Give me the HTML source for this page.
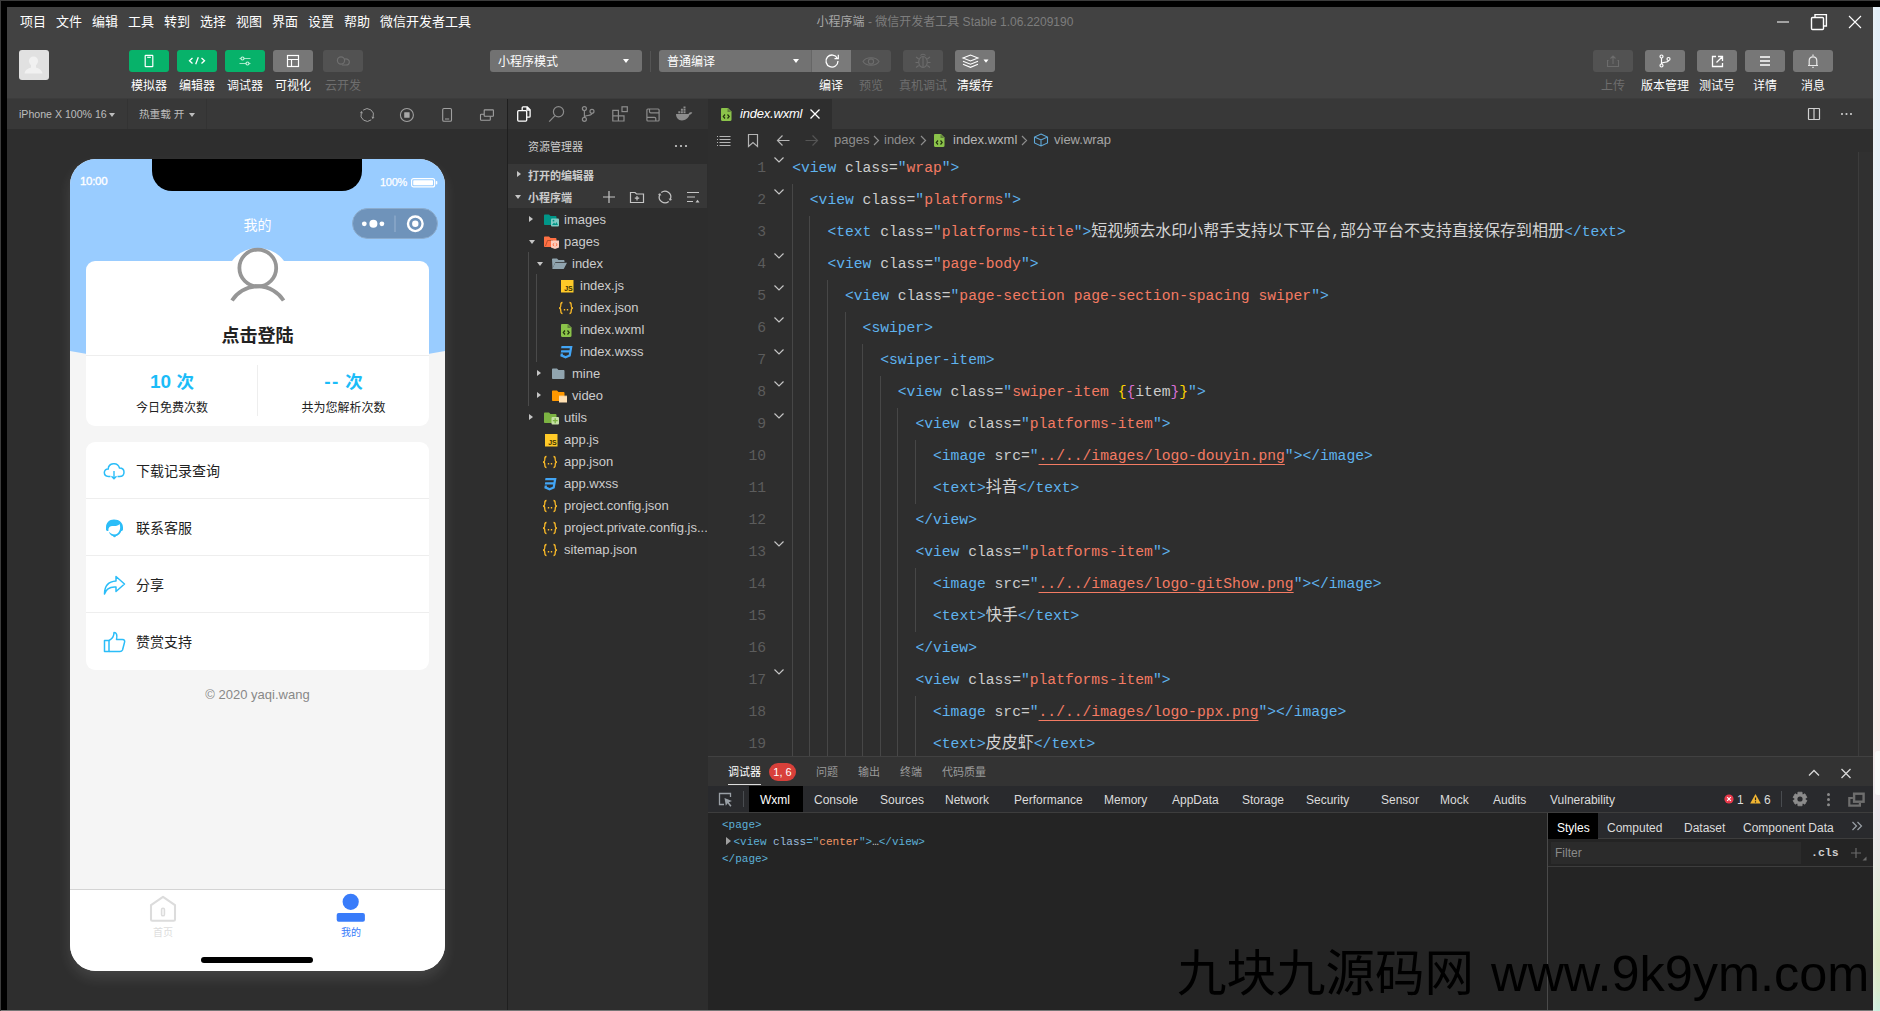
<!DOCTYPE html>
<html lang="zh-CN">
<head>
<meta charset="utf-8">
<title>小程序端 - 微信开发者工具 Stable 1.06.2209190</title>
<style>
*{box-sizing:border-box;margin:0;padding:0}
html,body{width:1880px;height:1011px;overflow:hidden;background:#000}
body{position:relative;font-family:"Liberation Sans","Noto Sans CJK SC",sans-serif;font-size:12px;color:#fff;line-height:1}
.a{position:absolute}
svg{display:block;overflow:visible}
/* outer frame */
#edgeT{left:0;top:0;width:1880px;height:1px;background:#3c3c3c}
#edgeL{left:0;top:0;width:1px;height:1011px;background:#3c3c3c}
#edgeR{left:1873px;top:7px;width:7px;height:1004px;background:linear-gradient(90deg,rgba(255,255,255,.25),rgba(255,255,255,0) 60%),linear-gradient(180deg,#e2eef7 0%,#e6eff6 15%,#f1eef0 30%,#f6ebea 45%,#f6eae8 72%,#f3ecee 75%,#ece7ee 80%,#e8e8e4 85%,#e0ecd2 90%,#dde9c6 95%,#d8ebcf 98%,#cdeede 100%)}
#edgeB{left:1px;top:1010px;width:1872px;height:1px;background:#767676}
#app{left:7px;top:7px;width:1866px;height:1003px;background:#424242;overflow:hidden}
#pg{left:-7px;top:-7px;width:1880px;height:1011px}
/* menu bar */
#menu span.m{position:absolute;top:15px;font-size:13px;color:#fff;white-space:nowrap}
#title{left:0;width:1890px;top:16px;text-align:center;font-size:12px;color:#7d7d7d;white-space:nowrap}
#title b{font-weight:normal;color:#a8a8a8}
/* toolbar */
.tb{position:absolute;top:50px;width:40px;height:22px;border-radius:3px;background:#777}
.tb.g{background:#07b26a}
.tb.d{background:#525252}
.tl{position:absolute;top:79.5px;width:80px;text-align:center;font-size:12px;color:#fff;white-space:nowrap}
.tl.d{color:#6e6e6e}
.sel{position:absolute;top:50px;height:22px;border-radius:3px;background:#727272;font-size:12px;color:#fff;line-height:25px;padding-left:8px}
.sel:after{content:"";position:absolute;right:13px;top:9px;border:3px solid transparent;border-top:4px solid #fff}

/* simulator */
#sim{left:7px;top:98px;width:500px;height:912px;background:#2e2e2e}
#simbar{left:7px;top:98px;width:500px;height:31px;background:#383838}
#simbar .t{position:absolute;top:11px;font-size:10.600px;color:#bdbdbd;white-space:nowrap}
.car{position:absolute;border:3.5px solid transparent;border-top:4.5px solid #bdbdbd}
#phone{left:70px;top:159px;width:375px;height:812px;border-radius:26px;background:#f5f5f5;overflow:hidden;color:#222}
#phsh{left:70px;top:159px;width:375px;height:812px;border-radius:26px;box-shadow:0 7px 14px 0 rgba(255,255,255,.11)}
#phone .hd{left:-95px;top:-293px;width:565px;height:500px;background:#9cf;border-radius:0 0 50% 50%/0 0 12% 12%}
#phone .card{left:16px;width:343px;background:#fff;border-radius:9px}
#phone .row{position:absolute;left:0;width:343px;height:57px;border-top:1px solid #eee}
#phone .row span{position:absolute;left:50px;top:22px;font-size:14px;color:#222}
#phone .row svg{position:absolute;left:15.500px;top:16.500px}

/* explorer */
#exp{left:507px;top:98px;width:201px;height:912px;background:#2d2d2d;border-left:1px solid #1f1f1f}
#expbar{left:508px;top:98px;width:200px;height:31px;background:#333}
#exphd{left:508px;top:129px;width:199px;height:35px;background:#2d2d2d}
.sec{position:absolute;left:508px;width:199px;height:22px;background:#373737;font-size:11px;font-weight:bold;color:#ccc;line-height:24px;padding-left:20px;white-space:nowrap}
.tr{position:absolute;left:508px;width:199px;height:22px;font-size:13px;color:#ccc;line-height:21px;white-space:nowrap;overflow:hidden}
.tr svg{position:absolute;top:3px}
.tr i{position:absolute;top:7px;margin-left:1px}
.ar{border:3.500px solid transparent;border-left:4.500px solid #c5c5c5;border-right:0;width:0;height:0}
.ad{border:3.500px solid transparent;border-top:4.500px solid #c5c5c5;border-bottom:0;width:0;height:0;margin-top:2px;margin-left:-2px}

/* editor */
#ed{left:708px;top:98px;width:1165px;height:658px;background:#2e2e2e}
#tabs{left:708px;top:98px;width:1165px;height:31px;background:#383838}
#tab1{left:708px;top:98px;width:124px;height:31px;background:#2e2e2e}
#bc{left:708px;top:129px;width:1165px;height:23px}
#bc span{position:absolute;top:4px;font-size:13px;color:#8d8d8d;white-space:nowrap}
.ln{position:absolute;margin-left:-0.800px;height:32px;font-family:"Liberation Mono","Noto Sans CJK SC",monospace;font-size:14.667px;line-height:32px;white-space:pre;color:#ccc;letter-spacing:0}
.ln b{font-weight:normal;color:#5fb3ee}
.ln u{text-decoration:none;color:#f47b63}
.ln u.l{text-decoration:underline;text-underline-offset:4px;text-decoration-thickness:1px}
.ln s{text-decoration:none;color:#ffd500}
.ln em{font-style:normal;color:#da70d6}
.ln i{line-height:0;font-style:normal;font-family:"Noto Sans CJK SC",sans-serif;font-size:16px;color:#d4d4d4}
.no{position:absolute;left:708px;width:58px;height:32px;text-align:right;font-family:"Liberation Mono",monospace;font-size:14.667px;line-height:32px;color:#5c5c5c}
.gd{position:absolute;width:1px;background:#474747}

/* debug */
#dbg{left:708px;top:756px;width:1165px;height:254px;background:#242424;border-top:1px solid #414141}
#dbghd{left:708px;top:757px;width:1165px;height:29px;background:#333}
#dbghd span{position:absolute;top:10px;font-size:11px;color:#999;white-space:nowrap}
#dt{left:708px;top:786px;width:1165px;height:27px;background:#292a2d;border-bottom:1px solid #3d3d3d}
#dt span{position:absolute;top:8px;font-size:12px;color:#dcdcdc;white-space:nowrap}
.wx{position:absolute;font-family:"Liberation Mono",monospace;font-size:11px;white-space:pre;color:#5db0d7}
.wx b{font-weight:normal;color:#9bbbdc}
.wx u{text-decoration:none;color:#f29766}
.wx i{font-style:normal;color:#ccc}
#st span{position:absolute;top:8.500px;font-size:12px;color:#dcdcdc;white-space:nowrap}
#wm{left:1177px;top:944px;font-size:50px;color:#000;white-space:nowrap;font-family:"Liberation Sans","Noto Sans CJK SC",sans-serif;line-height:60px}
</style>
</head>
<body>
<div class="a" id="edgeT"></div>
<div class="a" id="edgeL"></div>
<div class="a" id="edgeR"></div>
<div class="a" id="app"><div class="a" id="pg">
<div id="menu">
<span class="m" style="left:20px">项目</span><span class="m" style="left:56px">文件</span><span class="m" style="left:92px">编辑</span><span class="m" style="left:128px">工具</span><span class="m" style="left:164px">转到</span><span class="m" style="left:200px">选择</span><span class="m" style="left:236px">视图</span><span class="m" style="left:272px">界面</span><span class="m" style="left:308px">设置</span><span class="m" style="left:344px">帮助</span><span class="m" style="left:380px">微信开发者工具</span>
<div class="a" id="title"><b>小程序端</b> - 微信开发者工具 Stable 1.06.2209190</div>
<svg class="a" style="left:1770px;top:10px" width="100" height="26" viewBox="0 0 100 26" fill="none" stroke="#fff" stroke-width="1.2">
<path d="M7 12H19" stroke="#bbb" stroke-width="1.6"/>
<rect x="41.5" y="7.5" width="12" height="12" rx="1" stroke-width="1.4"/><path d="M45 7V4.600H56.400V16H54" stroke-width="1.4"/>
<path d="M79 6L91 18M91 6L79 18" stroke-width="1.1"/>
</svg>
</div>
<div id="toolbar">
<div class="a" style="left:19px;top:50px;width:30px;height:30px;border-radius:3px;background:#e1e1e1;overflow:hidden"><svg width="30" height="30" viewBox="0 0 30 30"><circle cx="14.5" cy="11" r="4.6" fill="#f1f1f1"/><path d="M5.5 23.5C6 20 9 18.5 12 17.5V15H17V17.5C20 18.5 23 20 23.5 23.5Z" fill="#f1f1f1"/></svg></div>
<div class="tb g" style="left:129px"><svg width="40" height="22" viewBox="0 0 40 22" fill="none" stroke="#fff" stroke-width="1.2"><rect x="16.2" y="5.3" width="7.6" height="11.4" rx="0.5"/><path d="M18.2 7.3H21.8"/></svg></div><div class="tb g" style="left:177px"><svg width="40" height="22" viewBox="0 0 40 22" fill="none" stroke="#fff" stroke-width="1.2"><path d="M15.5 8L12.5 10.7L15.5 13.4M24.5 8L27.5 10.7L24.5 13.4M21.3 7.2L18.7 14.2" stroke-width="1.3"/></svg></div><div class="tb g" style="left:225px"><svg width="40" height="22" viewBox="0 0 40 22" fill="none" stroke="#fff" stroke-width="1.2"><path d="M14.5 8.5H16M19 8.5H25.500M14.500 13.500H21M24 13.500H25.500" stroke="#9fe6c6"/><circle cx="17.5" cy="8.500" r="1.500" stroke="#c8f3de"/><circle cx="22.500" cy="13.500" r="1.500" stroke="#c8f3de"/></svg></div><div class="tb " style="left:273px"><svg width="40" height="22" viewBox="0 0 40 22" fill="none" stroke="#fff" stroke-width="1.2"><rect x="14.500" y="5.500" width="11" height="11"/><path d="M14.500 9.500H25.500M18.500 9.500V16.500"/></svg></div><div class="tb d" style="left:323px"><svg width="40" height="22" viewBox="0 0 40 22" fill="none" stroke="#fff" stroke-width="1.2"><circle cx="18" cy="10.5" r="3.600" stroke="#6f6f6f"/><path d="M21.300 9.200C24.500 8.200 26.800 10.300 26.300 12.600C26 14.300 24.600 15 23.200 15H19" stroke="#6f6f6f"/></svg></div><div class="tl " style="left:109px">模拟器</div><div class="tl " style="left:157px">编辑器</div><div class="tl " style="left:205px">调试器</div><div class="tl " style="left:253px">可视化</div><div class="tl d" style="left:303px">云开发</div>
<div class="sel" style="left:490px;width:152px">小程序模式</div><div class="a" style="left:650px;top:51px;width:1px;height:21px;background:#545454"></div><div class="sel" style="left:659px;width:153px;border-radius:3px 0 0 3px">普通编译</div>
<div class="tb" style="left:811px;border-radius:0;border-left:1px solid #666;background:#7a7a7a"><svg width="40" height="22" viewBox="0 0 40 22" fill="none" stroke="#fff" stroke-width="1.3"><path d="M25.300 8.200A6 6 0 1 0 26 11"/><path d="M26.300 4.800V8.600H22.500" stroke-width="1.2"/></svg></div><div class="tb d" style="left:851px;border-radius:0 3px 3px 0"><svg width="40" height="22" viewBox="0 0 40 22" fill="none" stroke="#6c6c6c" stroke-width="1.1"><path d="M12 11.500C15 6.500 25 6.500 28 11.500C25 16.500 15 16.500 12 11.500Z"/><circle cx="20" cy="11.500" r="2.600"/></svg></div><div class="tb d" style="left:903px"><svg width="40" height="22" viewBox="0 0 40 22" fill="none" stroke="#6c6c6c" stroke-width="1.1"><ellipse cx="20" cy="12" rx="4.300" ry="5.500"/><path d="M20 7V17.500M17.500 5.500C18.500 3.800 21.500 3.800 22.500 5.500M15.700 9L13 7M15.700 12.500H12.500M15.700 15.500L13 17.500M24.300 9L27 7M24.300 12.500H27.500M24.300 15.500L27 17.500"/></svg></div><div class="tb" style="left:955px"><svg width="40" height="22" viewBox="0 0 40 22" fill="none" stroke="#fff" stroke-width="1.1"><path d="M8 8L15.500 5L23 8L15.500 11Z"/><path d="M8 11.200L15.500 14.200L23 11.200M8 14.300L15.500 17.300L23 14.300"/><path d="M28.500 9.500H33.500L31 12.800Z" fill="#fff" stroke="none"/></svg></div>
<div class="tl " style="left:791px">编译</div><div class="tl d" style="left:831px">预览</div><div class="tl d" style="left:883px">真机调试</div><div class="tl " style="left:935px">清缓存</div>
<div class="tb d" style="left:1593px"><svg width="40" height="22" viewBox="0 0 40 22" fill="none" stroke="#6c6c6c" stroke-width="1.1"><path d="M15.500 10.500H14.500V16.500H25.500V10.500H24.500M20 14V6M17.500 8.500L20 6L22.500 8.500"/></svg></div><div class="tb " style="left:1645px"><svg width="40" height="22" viewBox="0 0 40 22" fill="none" stroke="#fff" stroke-width="1.2"><circle cx="16.500" cy="6.500" r="1.500"/><circle cx="16.500" cy="15.500" r="1.500"/><circle cx="23.500" cy="9" r="1.500"/><path d="M16.500 8V14M23.500 10.500C23.500 13 16.500 11.500 16.500 14"/></svg></div><div class="tb " style="left:1697px"><svg width="40" height="22" viewBox="0 0 40 22" fill="none" stroke="#fff" stroke-width="1.2"><path d="M19 6.500H15.500V16.500H25.500V13M21 6.500H25.500V11M25.300 6.700L19.500 12.500" stroke-width="1.3"/></svg></div><div class="tb " style="left:1745px"><svg width="40" height="22" viewBox="0 0 40 22" fill="none" stroke="#fff" stroke-width="1.2"><path d="M15 7H25M15 11H25M15 15H25" stroke-width="1.300"/></svg></div><div class="tb " style="left:1793px"><svg width="40" height="22" viewBox="0 0 40 22" fill="none" stroke="#fff" stroke-width="1.2"><path d="M15 15.500H25M16.200 15.500V10.800C16.200 5.500 23.800 5.500 23.800 10.800V15.500M20 4.500V6M19.300 17.300H20.700" stroke="#e8e8e8"/></svg></div><div class="tl d" style="left:1573px">上传</div><div class="tl " style="left:1625px">版本管理</div><div class="tl " style="left:1677px">测试号</div><div class="tl " style="left:1725px">详情</div><div class="tl " style="left:1773px">消息</div>
</div>
<div class="a" id="sim"></div>
<div class="a" style="left:7px;top:98px;width:1866px;height:1px;background:#3c3c3c;z-index:5"></div>
<div class="a" id="simbar">
<span class="t" style="left:12px">iPhone X 100% 16</span><i class="car" style="left:102px;top:15px"></i>
<i class="a" style="left:120px;top:0;width:1px;height:31px;background:#333"></i>
<span class="t" style="left:132px">热重载 开</span><i class="car" style="left:182px;top:15px"></i>
<i class="a" style="left:199px;top:0;width:1px;height:31px;background:#333"></i>
<svg class="a" style="left:350px;top:6px" width="150" height="22" viewBox="0 0 150 22" fill="none" stroke="#a0a0a0" stroke-width="1.100">
<path d="M6.150 6.170A6.300 6.300 0 0 1 16.120 13.150M14.250 15.830A6.300 6.300 0 0 1 4.280 8.850" stroke-width="1"/><path d="M4.900 7L2.900 8.500L5.900 9.500ZM15.500 15L17.500 13.500L14.500 12.500Z" fill="#a0a0a0" stroke="none"/>
<circle cx="49.900" cy="11" r="6.500"/><rect x="47.200" y="8.300" width="5.400" height="5.400" rx="0.500" fill="#a8a8a8" stroke="none"/>
<rect x="85.700" y="4.500" width="8.800" height="12.800" rx="1.300"/><path d="M88 15H92.200" stroke-width="1"/>
<rect x="127.200" y="5.900" width="9.200" height="6.300" rx="0.500"/><path d="M127 10.200H124.200C123.800 10.200 123.500 10.500 123.500 10.900V15.500C123.500 15.900 123.800 16.200 124.200 16.200H132.600C133 16.200 133.300 15.900 133.300 15.500V12.500"/>
</svg>
</div>
<div class="a" id="phsh"></div>
<div class="a" id="phone">
<div class="a hd"></div>
<div class="a" style="left:82px;top:0;width:210px;height:32px;background:#000;border-radius:0 0 20px 20px"></div>
<div class="a" style="left:10px;top:17px;font-size:11.500px;color:#fff;letter-spacing:-0.300px;-webkit-text-stroke:0.35px #fff">10:00</div>
<div class="a" style="left:310px;top:18px;font-size:11px;color:#fff;letter-spacing:-0.300px;-webkit-text-stroke:0.25px #fff">100%</div>
<svg class="a" style="left:341px;top:19px" width="28" height="10" viewBox="0 0 28 10"><rect x="0.600" y="0.600" width="23" height="8.300" rx="2" fill="none" stroke="#fff" stroke-width="1.200"/><rect x="2.200" y="2.200" width="19.800" height="5.100" rx="0.800" fill="#fff"/><rect x="24.800" y="3" width="1.500" height="3.500" rx="0.700" fill="#fff"/></svg>
<div class="a" style="left:0;top:59px;width:375px;text-align:center;font-size:14px;color:#fff;padding-left:0">我的</div>
<div class="a" style="left:282px;top:49px;width:86px;height:31px;border-radius:16px;background:#6f93ba;border:1px solid #8caccd"></div>
<svg class="a" style="left:282px;top:49px" width="86" height="31" viewBox="0 0 86 31"><circle cx="12.300" cy="15.800" r="2.400" fill="#fff"/><circle cx="21.400" cy="15.800" r="4" fill="#fff"/><circle cx="29.900" cy="15.800" r="2.400" fill="#fff"/><path d="M43 7.500V24" stroke="#9db7d3" stroke-width="0.900"/><circle cx="63.300" cy="15.800" r="7.300" fill="none" stroke="#fff" stroke-width="2.400"/><circle cx="63.300" cy="15.800" r="3.200" fill="#fff"/></svg>
<!-- profile card -->
<div class="a card" style="top:102px;height:165px"></div>
<div class="a" style="left:155px;top:89px;width:66px;height:66px;border-radius:50%;background:#fff"></div>
<svg class="a" style="left:155px;top:89px" width="66" height="66" viewBox="0 0 66 66" fill="none" stroke="#969696" stroke-width="3.800"><circle cx="32.800" cy="20" r="18.400"/><path d="M7 52.400A30.600 30.600 0 0 1 58.600 52.400"/></svg>
<div class="a" style="left:0;top:168px;width:375px;text-align:center;font-size:18px;font-weight:bold;color:#222">点击登陆</div>
<div class="a" style="left:16px;top:196px;width:343px;height:1px;background:#eee"></div>
<div class="a" style="left:187px;top:206px;width:1px;height:51px;background:#eee"></div>
<div class="a" style="left:16px;top:213px;width:172px;text-align:center;font-size:19px;font-weight:bold;color:#1bbcf8">10 <span style="font-size:17.5px">次</span></div>
<div class="a" style="left:188px;top:213px;width:171px;text-align:center;font-size:19px;font-weight:bold;color:#1bbcf8"><span style="letter-spacing:1.5px">--</span> <span style="font-size:17.5px">次</span></div>
<div class="a" style="left:16px;top:243px;width:172px;text-align:center;font-size:12px;color:#222">今日免费次数</div>
<div class="a" style="left:188px;top:243px;width:171px;text-align:center;font-size:12px;color:#222">共为您解析次数</div>
<!-- list -->
<div class="a card" style="top:283px;height:228px;overflow:hidden">
<div class="row" style="top:-1px"><svg width="24" height="24" viewBox="0 0 24 24" fill="none" stroke="#2bbdf8" stroke-width="1.500"><path d="M8.500 17.500H6.500C0.800 17.200 1.200 9.800 6.200 10C6.500 4 15.500 2.500 17.500 9C23.500 9 23.500 17.500 17.500 17.500H15.500"/><path d="M12 12V19.500M9.500 17.300L12 19.800L14.500 17.300" stroke-width="1.400"/></svg><span>下载记录查询</span></div>
<div class="row" style="top:56px"><svg width="24" height="24" viewBox="0 0 24 24" fill="#2bbdf8"><path d="M12 3.500C7 3.500 4 7 4 11.500V13.500C4 14.500 5 15.300 6 15L6.500 14.800C6 10.500 9 9.500 12.500 10C14.500 10 16.500 9.500 17.500 8C18.300 10 18.500 12.500 17.500 14.500C16.500 17 14.500 18.500 12.500 18.500C10.500 18.500 8.500 17.500 7.300 15.800C7 17.500 9 20 12 20.300C15.500 20.300 18.500 18 19.300 15C20.300 15 21 14.300 21 13.500V11.500C21 7 17.500 3.500 12 3.500Z"/><circle cx="12.500" cy="20" r="1.300"/></svg><span>联系客服</span></div>
<div class="row" style="top:113px"><svg width="24" height="24" viewBox="0 0 24 24" fill="none" stroke="#2bbdf8" stroke-width="1.500" stroke-linejoin="round"><path d="M14 3.500L22.500 11L14 18.500V14C8 13.500 4 16 2.500 21C2.500 13 6.500 8.500 14 8Z"/></svg><span>分享</span></div>
<div class="row" style="top:170px"><svg width="24" height="24" viewBox="0 0 24 24" fill="none" stroke="#2bbdf8" stroke-width="1.500" stroke-linejoin="round"><path d="M2.500 10.500H7V21.500H2.500Z"/><path d="M7 10.500C10 9 12 6 12 2.500C14.500 2.500 15.500 5 14.500 9.500H20.500C22.500 9.500 23 11 22.500 12.500L20.500 20C20 21 19.500 21.500 18 21.500H7"/></svg><span>赞赏支持</span></div>
</div>
<div class="a" style="left:0;top:529px;width:375px;text-align:center;font-size:13px;color:#888">© 2020 yaqi.wang</div>
<!-- tabbar -->
<div class="a" style="left:0;top:730px;width:375px;height:82px;background:#fff;border-top:1px solid #d4d4d4"></div>
<svg class="a" style="left:78px;top:735px" width="30" height="30" viewBox="0 0 30 30" fill="none" stroke="#dcdcdc" stroke-width="2.1" stroke-linejoin="round"><path d="M3 11.200L15 2.800L27 11.200V25.500C27 26.300 26.500 26.800 25.700 26.800H4.300C3.500 26.800 3 26.300 3 25.500Z"/><rect x="13.600" y="14.200" width="2.800" height="7.600" rx="1.400" stroke-width="1.600"/></svg>
<div class="a" style="left:43px;top:769px;width:100px;text-align:center;font-size:10px;color:#ddd">首页</div>
<svg class="a" style="left:265px;top:733px" width="32" height="32" viewBox="0 0 32 32" fill="#397cfa"><circle cx="15.700" cy="9.800" r="8.100"/><rect x="1.700" y="21" width="28.200" height="8.700" rx="2"/></svg>
<div class="a" style="left:231px;top:769px;width:100px;text-align:center;font-size:10px;color:#397cfa">我的</div>
<div class="a" style="left:131px;top:798px;width:112px;height:6px;border-radius:3px;background:#000"></div>
</div>
<div class="a" id="exp"></div><div class="a" id="expbar">
<svg class="a" style="left:0;top:0" width="199" height="31" viewBox="0 0 199 31" fill="none" stroke="#8c8c8c" stroke-width="1.200">
<path d="M14.200 12V9.800C14.200 9.300 14.600 8.900 15.100 8.900H19.300L22.100 11.700V18.200C22.100 18.700 21.700 19.100 21.200 19.100H18.800M19 9V12H22" stroke="#fff" stroke-width="1.300"/><rect x="9.700" y="12.700" width="9" height="10.400" rx="1" stroke="#fff" stroke-width="1.300"/>
<circle cx="50.500" cy="13.800" r="5.100"/><path d="M47 17.600L41.200 23.600"/>
<circle cx="76.400" cy="10.600" r="2"/><circle cx="76.400" cy="21.300" r="2"/><circle cx="84" cy="13.300" r="2"/><path d="M76.400 12.600V19.300M84 15.300C84 18.500 76.400 16.500 76.400 19.300"/>
<path d="M104.800 12.300H110.400V17.800H116V23H104.800ZM110.400 17.800V23M104.800 17.800H110.400"/><rect x="114" y="8.800" width="5.300" height="4.800"/>
<rect x="138.900" y="11" width="12.200" height="12" rx="1"/><path d="M141.500 11V13.500C141.500 14.300 142 14.800 142.800 14.800H151M139 19.300H146.500C147.300 19.300 147.800 19.800 147.800 20.600V23"/>
<path d="M168 16H180.500C181 14.500 182.300 13.800 184.300 14.400C183.800 15.600 182.800 16.500 181.500 16.800C180.500 20 177.500 22.400 174 22.400C170 22.400 168 19.500 168 16Z" fill="#8c8c8c" stroke="none"/><path d="M170.300 13.300H172.300V15.300H170.300ZM172.900 13.300H174.900V15.300H172.900ZM175.500 13.300H177.500V15.300H175.500ZM172.900 10.800H174.900V12.800H172.900ZM175.500 10.800H177.500V12.800H175.500ZM175.500 8.600H177.500V10.300H175.500Z" fill="#8c8c8c" stroke="none"/>
</svg></div>
<div class="a" id="exphd"><span class="a" style="left:20px;top:13px;font-size:11px;color:#ccc">资源管理器</span><svg class="a" style="left:166px;top:15px" width="14" height="4" viewBox="0 0 14 4" fill="#ccc"><circle cx="2" cy="2" r="1.100"/><circle cx="7" cy="2" r="1.100"/><circle cx="12" cy="2" r="1.100"/></svg></div>
<div class="sec" style="top:164px"><i class="a ar" style="left:8.5px;top:7px;border-left-color:#c5c5c5"></i>打开的编辑器</div>
<div class="sec" style="top:186px"><i class="a ad" style="left:9px;top:7px"></i>小程序端
<svg class="a" style="left:92px;top:2px" width="104" height="18" viewBox="0 0 104 18" fill="none" stroke="#c5c5c5" stroke-width="1.200"><path d="M9 3V15M3 9H15"/><path d="M30.500 4.500H35L36.500 6H43.500V14.500H30.500ZM37 8V12.500M34.800 10.200H39.200"/><path d="M61.27 4.56A5.8 5.8 0 0 1 70.45 10.98M68.73 13.44A5.8 5.8 0 0 1 59.55 7.02"/><path d="M69.83 12.68L72.24 11.63L68.66 10.33ZM60.17 5.32L57.76 6.37L61.34 7.67Z" fill="#c5c5c5" stroke="none"/><path d="M87 4.500H99M87 9H95M87 13.500H93"/><path d="M95.500 14.500H99.500L97.500 11.800Z" fill="#c5c5c5" stroke="none"/></svg></div>
<div class="a" style="left:528px;top:252px;width:1px;height:154px;background:#4a4a4a"></div>
<div class="a" style="left:536px;top:274px;width:1px;height:88px;background:#4a4a4a"></div>
<div class="tr" style="top:209px"><i class="ar" style="left:20px"></i><svg style="left:35px" width="17" height="16" viewBox="0 0 17 16"><path d="M1 3.500C1 2.900 1.500 2.500 2 2.500H6L7.500 4H12.500C13.100 4 13.500 4.500 13.500 5V12C13.500 12.600 13 13 12.500 13H2C1.400 13 1 12.500 1 12Z" fill="#009688"/><rect x="8" y="6.500" width="8" height="8" rx="1" fill="#80cbc4"/><path d="M9 13L11 10.500L12.300 12L13.500 10L15 13Z" fill="#009688"/><circle cx="10.500" cy="8.700" r="0.900" fill="#009688"/></svg><span class="a" style="left:56px">images</span></div>
<div class="tr" style="top:231px"><i class="ad" style="left:20px"></i><svg style="left:35px" width="17" height="16" viewBox="0 0 17 16"><path d="M1 3.500C1 2.900 1.500 2.500 2 2.500H6L7.500 4H12.500C13.100 4 13.500 4.500 13.500 5V12C13.500 12.600 13 13 12.500 13H2C1.400 13 1 12.500 1 12Z" fill="#ff7043"/><path d="M2.500 12L4.500 6.500H10" fill="none" stroke="#8a3a22" stroke-width="1" opacity=".6"/><path d="M8 6.500H16V13.500L12 15L8 13.500Z" fill="#ffccbc"/><path d="M11.200 9.300L9.800 10.600L11.200 11.900M12.800 9.300L14.200 10.600L12.800 11.900" fill="none" stroke="#ff5722" stroke-width="0.900"/></svg><span class="a" style="left:56px">pages</span></div>
<div class="tr" style="top:253px"><i class="ad" style="left:28px"></i><svg style="left:43px" width="17" height="16" viewBox="0 0 17 16"><path d="M1 3.500C1 2.900 1.500 2.500 2 2.500H6L7.500 4H12.500C13.100 4 13.500 4.500 13.500 5V6H4.500L1.500 12.500Z" fill="#90a4ae"/><path d="M1.200 13L4.300 6.800H16L13 12.400C12.800 12.800 12.500 13 12 13Z" fill="#90a4ae"/></svg><span class="a" style="left:64px">index</span></div>
<div class="tr" style="top:275px"><svg style="left:51px" width="16" height="16" viewBox="0 0 16 16"><rect x="2" y="2" width="12.500" height="12.500" fill="#ffca28"/><text x="5.300" y="13" font-size="7" font-weight="bold" fill="#3a3000" font-family="Liberation Sans,sans-serif" letter-spacing="-0.300">JS</text></svg><span class="a" style="left:72px">index.js</span></div>
<div class="tr" style="top:297px"><svg style="left:50px" width="16" height="16" viewBox="0 0 16 16" fill="none" stroke="#f9b928" stroke-width="1.300"><path d="M4.500 2.500C2.800 2.500 2.800 3.500 2.800 5C2.800 6.500 2.800 8 1 8C2.800 8 2.800 9.500 2.800 11C2.800 12.500 2.800 13.500 4.500 13.500M11.500 2.500C13.200 2.500 13.200 3.500 13.200 5C13.200 6.500 13.200 8 15 8C13.200 8 13.200 9.500 13.200 11C13.200 12.500 13.200 13.500 11.500 13.500"/><path d="M5.800 9.800H7.200M8.800 9.800H10.200" stroke-width="1.400"/></svg><span class="a" style="left:72px">index.json</span></div>
<div class="tr" style="top:319px"><svg style="left:50px" width="16" height="16" viewBox="0 0 16 16"><path d="M3 3.200C3 2.500 3.500 2 4.200 2H10L13.500 5.500V13.800C13.500 14.500 13 15 12.300 15H4.200C3.500 15 3 14.500 3 13.800Z" fill="#8bc34a"/><path d="M9.500 2.300V6H13.200Z" fill="#2b2b2b" opacity=".45"/><path d="M7 8.500L5.300 10.500L7 12.500M9.500 8.500L11.200 10.500L9.500 12.500" fill="none" stroke="#23330e" stroke-width="1.200"/></svg><span class="a" style="left:72px">index.wxml</span></div>
<div class="tr" style="top:341px"><svg style="left:50px" width="16" height="16" viewBox="0 0 16 16"><path d="M3.500 2H14.500L12.700 12.300L7.500 14.500L2.300 12.300L2.700 9.500H5L4.800 10.800L7.700 12L10.700 10.800L11.100 8.600H2.800L3.200 6.300H11.500L11.800 4.300H3.100Z" fill="#42a5f5"/></svg><span class="a" style="left:72px">index.wxss</span></div>
<div class="tr" style="top:363px"><i class="ar" style="left:28px"></i><svg style="left:43px" width="17" height="16" viewBox="0 0 17 16"><path d="M1 3.500C1 2.900 1.500 2.500 2 2.500H6L7.500 4H12.500C13.100 4 13.500 4.500 13.500 5V12C13.500 12.600 13 13 12.500 13H2C1.400 13 1 12.500 1 12Z" fill="#90a4ae"/></svg><span class="a" style="left:64px">mine</span></div>
<div class="tr" style="top:385px"><i class="ar" style="left:28px"></i><svg style="left:43px" width="17" height="16" viewBox="0 0 17 16"><path d="M1 3.500C1 2.900 1.500 2.500 2 2.500H6L7.500 4H12.500C13.100 4 13.500 4.500 13.500 5V12C13.500 12.600 13 13 12.500 13H2C1.400 13 1 12.500 1 12Z" fill="#ff9800"/><path d="M8 8.500L9 7L10 8.500L11 7L12 8.500L13 7L14 8.500L15 7L16 8.500V14.500H8Z" fill="#ffe0b2"/></svg><span class="a" style="left:64px">video</span></div>
<div class="tr" style="top:407px"><i class="ar" style="left:20px"></i><svg style="left:35px" width="17" height="16" viewBox="0 0 17 16"><path d="M1 3.500C1 2.900 1.500 2.500 2 2.500H6L7.500 4H12.500C13.100 4 13.500 4.500 13.500 5V12C13.500 12.600 13 13 12.500 13H2C1.400 13 1 12.500 1 12Z" fill="#7cb342"/><rect x="8.500" y="7" width="7.500" height="7.500" rx="1" fill="#c5e1a5"/><path d="M12.200 8.300V13.200M9.800 10.700H14.700" stroke="#7cb342" stroke-width="1.300"/></svg><span class="a" style="left:56px">utils</span></div>
<div class="tr" style="top:429px"><svg style="left:35px" width="16" height="16" viewBox="0 0 16 16"><rect x="2" y="2" width="12.500" height="12.500" fill="#ffca28"/><text x="5.300" y="13" font-size="7" font-weight="bold" fill="#3a3000" font-family="Liberation Sans,sans-serif" letter-spacing="-0.300">JS</text></svg><span class="a" style="left:56px">app.js</span></div>
<div class="tr" style="top:451px"><svg style="left:34px" width="16" height="16" viewBox="0 0 16 16" fill="none" stroke="#f9b928" stroke-width="1.300"><path d="M4.500 2.500C2.800 2.500 2.800 3.500 2.800 5C2.800 6.500 2.800 8 1 8C2.800 8 2.800 9.500 2.800 11C2.800 12.500 2.800 13.500 4.500 13.500M11.500 2.500C13.200 2.500 13.200 3.500 13.200 5C13.200 6.500 13.200 8 15 8C13.200 8 13.200 9.500 13.200 11C13.200 12.500 13.200 13.500 11.500 13.500"/><path d="M5.800 9.800H7.200M8.800 9.800H10.200" stroke-width="1.400"/></svg><span class="a" style="left:56px">app.json</span></div>
<div class="tr" style="top:473px"><svg style="left:34px" width="16" height="16" viewBox="0 0 16 16"><path d="M3.500 2H14.500L12.700 12.300L7.500 14.500L2.300 12.300L2.700 9.500H5L4.800 10.800L7.700 12L10.700 10.800L11.100 8.600H2.800L3.200 6.300H11.500L11.800 4.300H3.100Z" fill="#42a5f5"/></svg><span class="a" style="left:56px">app.wxss</span></div>
<div class="tr" style="top:495px"><svg style="left:34px" width="16" height="16" viewBox="0 0 16 16" fill="none" stroke="#f9b928" stroke-width="1.300"><path d="M4.500 2.500C2.800 2.500 2.800 3.500 2.800 5C2.800 6.500 2.800 8 1 8C2.800 8 2.800 9.500 2.800 11C2.800 12.500 2.800 13.500 4.500 13.500M11.500 2.500C13.200 2.500 13.200 3.500 13.200 5C13.200 6.500 13.200 8 15 8C13.200 8 13.200 9.500 13.200 11C13.200 12.500 13.200 13.500 11.500 13.500"/><path d="M5.800 9.800H7.200M8.800 9.800H10.200" stroke-width="1.400"/></svg><span class="a" style="left:56px">project.config.json</span></div>
<div class="tr" style="top:517px"><svg style="left:34px" width="16" height="16" viewBox="0 0 16 16" fill="none" stroke="#f9b928" stroke-width="1.300"><path d="M4.500 2.500C2.800 2.500 2.800 3.500 2.800 5C2.800 6.500 2.800 8 1 8C2.800 8 2.800 9.500 2.800 11C2.800 12.500 2.800 13.500 4.500 13.500M11.500 2.500C13.200 2.500 13.200 3.500 13.200 5C13.200 6.500 13.200 8 15 8C13.200 8 13.200 9.500 13.200 11C13.200 12.500 13.200 13.500 11.500 13.500"/><path d="M5.800 9.800H7.200M8.800 9.800H10.200" stroke-width="1.400"/></svg><span class="a" style="left:56px">project.private.config.js...</span></div>
<div class="tr" style="top:539px"><svg style="left:34px" width="16" height="16" viewBox="0 0 16 16" fill="none" stroke="#f9b928" stroke-width="1.300"><path d="M4.500 2.500C2.800 2.500 2.800 3.500 2.800 5C2.800 6.500 2.800 8 1 8C2.800 8 2.800 9.500 2.800 11C2.800 12.500 2.800 13.500 4.500 13.500M11.500 2.500C13.200 2.500 13.200 3.500 13.200 5C13.200 6.500 13.200 8 15 8C13.200 8 13.200 9.500 13.200 11C13.200 12.500 13.200 13.500 11.500 13.500"/><path d="M5.800 9.800H7.200M8.800 9.800H10.200" stroke-width="1.400"/></svg><span class="a" style="left:56px">sitemap.json</span></div>
<div class="a" id="ed"></div><div class="a" id="tabs"></div><div class="a" id="tab1"><svg class="a" style="left:10px;top:8px" width="16" height="16" viewBox="0 0 16 16"><path d="M3 3.200C3 2.500 3.500 2 4.200 2H10L13.500 5.500V13.800C13.500 14.500 13 15 12.300 15H4.200C3.500 15 3 14.500 3 13.800Z" fill="#8bc34a"/><path d="M9.500 2.300V6H13.200Z" fill="#2b2b2b" opacity=".45"/><path d="M7 8.500L5.300 10.500L7 12.500M9.500 8.500L11.200 10.500L9.500 12.500" fill="none" stroke="#23330e" stroke-width="1.200"/></svg><span class="a" style="left:32px;top:9px;font-size:13px;font-style:italic;color:#fff;letter-spacing:-0.200px">index.wxml</span><svg class="a" style="left:101px;top:10px" width="12" height="12" viewBox="0 0 12 12" stroke="#fff" stroke-width="1.300"><path d="M1.500 1.500L10.500 10.500M10.500 1.500L1.500 10.500"/></svg></div>
<svg class="a" style="left:1805px;top:106px" width="60" height="16" viewBox="0 0 60 16" fill="none" stroke="#d0d0d0" stroke-width="1.200"><rect x="3.500" y="2.500" width="11" height="11" rx="0.500"/><path d="M9 2.500V13.500"/><g fill="#d0d0d0" stroke="none"><circle cx="37" cy="8" r="1.050"/><circle cx="41.500" cy="8" r="1.050"/><circle cx="46" cy="8" r="1.050"/></g></svg>
<div class="a" id="bc"><svg class="a" style="left:6px;top:3px" width="110" height="17" viewBox="0 0 110 17" fill="none" stroke="#b5b5b5" stroke-width="1.100"><path d="M5.500 4.500H16.500M5.500 7.500H16.500M5.500 10.500H16.500M5.500 13.500H16.500M3 4.500H4M3 7.500H4M3 10.500H4M3 13.500H4"/><path d="M34.500 2.500H43.500V14.500L39 10.500L34.500 14.500Z" stroke-width="1.200"/><path d="M75.500 8.500H63.500M68.500 3.500L63.500 8.500L68.500 13.500" stroke-width="1.200"/><path d="M91.500 8.500H103.500M98.500 3.500L103.500 8.500L98.500 13.500" stroke="#555" stroke-width="1.200"/></svg><span style="left:126px">pages</span><span style="left:176px">index</span><svg class="a" style="left:223px;top:3px" width="16" height="16" viewBox="0 0 16 16"><path d="M3 3.200C3 2.500 3.500 2 4.200 2H10L13.500 5.500V13.800C13.500 14.500 13 15 12.300 15H4.200C3.500 15 3 14.500 3 13.800Z" fill="#8bc34a"/><path d="M9.500 2.300V6H13.200Z" fill="#2b2b2b" opacity=".45"/><path d="M7 8.500L5.300 10.500L7 12.500M9.500 8.500L11.200 10.500L9.500 12.500" fill="none" stroke="#23330e" stroke-width="1.200"/></svg><span style="left:245px;color:#b8b8b8">index.wxml</span><svg class="a" style="left:325px;top:3px" width="16" height="16" viewBox="0 0 16 16" fill="none" stroke="#5fa8d8" stroke-width="1.100"><path d="M8 2L14.500 5V11L8 14L1.500 11V5ZM1.500 5L8 8L14.500 5M8 8V14"/></svg><span style="left:346px;color:#a6a6a6">view.wrap</span><svg class="a" style="left:160px;top:5px" width="170" height="13" viewBox="0 0 170 13" fill="none" stroke="#8d8d8d" stroke-width="1.200"><path d="M6 2L10.500 6.500L6 11M53 2L57.500 6.500L53 11M154 2L158.500 6.500L154 11"/></svg></div>
<div class="a" id="code" style="left:0;top:0;width:1880px;height:756px;overflow:hidden">
<div class="no" style="top:152px">1</div><svg class="a" style="left:773px;top:156px" width="12" height="8" viewBox="0 0 12 8" fill="none" stroke="#c5c5c5" stroke-width="1.200"><path d="M1.500 1.500L6 6L10.500 1.500"/></svg><div class="ln" style="top:152px;left:793.0px"><b>&lt;view</b> class=<b>"</b><u>wrap</u><b>"</b><b>&gt;</b></div>
<div class="no" style="top:184px">2</div><svg class="a" style="left:773px;top:188px" width="12" height="8" viewBox="0 0 12 8" fill="none" stroke="#c5c5c5" stroke-width="1.200"><path d="M1.500 1.500L6 6L10.500 1.500"/></svg><div class="ln" style="top:184px;left:810.6px"><b>&lt;view</b> class=<b>"</b><u>platforms</u><b>"</b><b>&gt;</b></div>
<div class="no" style="top:216px">3</div><div class="ln" style="top:216px;left:828.2px"><b>&lt;text</b> class=<b>"</b><u>platforms-title</u><b>"</b><b>&gt;</b><i>短视频去水印小帮手支持以下平台</i>,<i>部分平台不支持直接保存到相册</i><b>&lt;/text&gt;</b></div>
<div class="no" style="top:248px">4</div><svg class="a" style="left:773px;top:252px" width="12" height="8" viewBox="0 0 12 8" fill="none" stroke="#c5c5c5" stroke-width="1.200"><path d="M1.500 1.500L6 6L10.500 1.500"/></svg><div class="ln" style="top:248px;left:828.2px"><b>&lt;view</b> class=<b>"</b><u>page-body</u><b>"</b><b>&gt;</b></div>
<div class="no" style="top:280px">5</div><svg class="a" style="left:773px;top:284px" width="12" height="8" viewBox="0 0 12 8" fill="none" stroke="#c5c5c5" stroke-width="1.200"><path d="M1.500 1.500L6 6L10.500 1.500"/></svg><div class="ln" style="top:280px;left:845.8px"><b>&lt;view</b> class=<b>"</b><u>page-section page-section-spacing swiper</u><b>"</b><b>&gt;</b></div>
<div class="no" style="top:312px">6</div><svg class="a" style="left:773px;top:316px" width="12" height="8" viewBox="0 0 12 8" fill="none" stroke="#c5c5c5" stroke-width="1.200"><path d="M1.500 1.500L6 6L10.500 1.500"/></svg><div class="ln" style="top:312px;left:863.4px"><b>&lt;swiper&gt;</b></div>
<div class="no" style="top:344px">7</div><svg class="a" style="left:773px;top:348px" width="12" height="8" viewBox="0 0 12 8" fill="none" stroke="#c5c5c5" stroke-width="1.200"><path d="M1.500 1.500L6 6L10.500 1.500"/></svg><div class="ln" style="top:344px;left:881.0px"><b>&lt;swiper-item&gt;</b></div>
<div class="no" style="top:376px">8</div><svg class="a" style="left:773px;top:380px" width="12" height="8" viewBox="0 0 12 8" fill="none" stroke="#c5c5c5" stroke-width="1.200"><path d="M1.500 1.500L6 6L10.500 1.500"/></svg><div class="ln" style="top:376px;left:898.6px"><b>&lt;view</b> class=<b>"</b><u>swiper-item </u><s>{</s><em>{</em>item<em>}</em><s>}</s><b>"</b><b>&gt;</b></div>
<div class="no" style="top:408px">9</div><svg class="a" style="left:773px;top:412px" width="12" height="8" viewBox="0 0 12 8" fill="none" stroke="#c5c5c5" stroke-width="1.200"><path d="M1.500 1.500L6 6L10.500 1.500"/></svg><div class="ln" style="top:408px;left:916.2px"><b>&lt;view</b> class=<b>"</b><u>platforms-item</u><b>"</b><b>&gt;</b></div>
<div class="no" style="top:440px">10</div><div class="ln" style="top:440px;left:933.8px"><b>&lt;image</b> src<span>=</span><b>"</b><u class="l">../../images/logo-douyin.png</u><b>"</b><b>&gt;&lt;/image&gt;</b></div>
<div class="no" style="top:472px">11</div><div class="ln" style="top:472px;left:933.8px"><b>&lt;text&gt;</b><i>抖音</i><b>&lt;/text&gt;</b></div>
<div class="no" style="top:504px">12</div><div class="ln" style="top:504px;left:916.2px"><b>&lt;/view&gt;</b></div>
<div class="no" style="top:536px">13</div><svg class="a" style="left:773px;top:540px" width="12" height="8" viewBox="0 0 12 8" fill="none" stroke="#c5c5c5" stroke-width="1.200"><path d="M1.500 1.500L6 6L10.500 1.500"/></svg><div class="ln" style="top:536px;left:916.2px"><b>&lt;view</b> class=<b>"</b><u>platforms-item</u><b>"</b><b>&gt;</b></div>
<div class="no" style="top:568px">14</div><div class="ln" style="top:568px;left:933.8px"><b>&lt;image</b> src<span>=</span><b>"</b><u class="l">../../images/logo-gitShow.png</u><b>"</b><b>&gt;&lt;/image&gt;</b></div>
<div class="no" style="top:600px">15</div><div class="ln" style="top:600px;left:933.8px"><b>&lt;text&gt;</b><i>快手</i><b>&lt;/text&gt;</b></div>
<div class="no" style="top:632px">16</div><div class="ln" style="top:632px;left:916.2px"><b>&lt;/view&gt;</b></div>
<div class="no" style="top:664px">17</div><svg class="a" style="left:773px;top:668px" width="12" height="8" viewBox="0 0 12 8" fill="none" stroke="#c5c5c5" stroke-width="1.200"><path d="M1.500 1.500L6 6L10.500 1.500"/></svg><div class="ln" style="top:664px;left:916.2px"><b>&lt;view</b> class=<b>"</b><u>platforms-item</u><b>"</b><b>&gt;</b></div>
<div class="no" style="top:696px">18</div><div class="ln" style="top:696px;left:933.8px"><b>&lt;image</b> src<span>=</span><b>"</b><u class="l">../../images/logo-ppx.png</u><b>"</b><b>&gt;&lt;/image&gt;</b></div>
<div class="no" style="top:728px">19</div><div class="ln" style="top:728px;left:933.8px"><b>&lt;text&gt;</b><i>皮皮虾</i><b>&lt;/text&gt;</b></div>
<div class="gd" style="left:791.8px;top:184px;height:576px"></div><div class="gd" style="left:809.4px;top:216px;height:544px"></div><div class="gd" style="left:827.0px;top:280px;height:480px"></div><div class="gd" style="left:844.6px;top:312px;height:448px"></div><div class="gd" style="left:862.2px;top:344px;height:416px"></div><div class="gd" style="left:879.8px;top:376px;height:384px"></div><div class="gd" style="left:897.4px;top:408px;height:352px"></div><div class="gd" style="left:915.0px;top:440px;height:64px"></div><div class="gd" style="left:915.0px;top:568px;height:64px"></div><div class="gd" style="left:915.0px;top:696px;height:64px"></div>
<div class="a" style="left:1858px;top:152px;width:1px;height:604px;background:#3c3c3c"></div><div class="a" style="left:1859px;top:152px;width:14px;height:604px;background:#303030"></div>
</div>
<div class="a" id="dbg"></div>
<div class="a" id="dbghd">
<span style="left:20px;color:#fff">调试器</span><i class="a" style="left:20px;top:27px;width:33px;height:1px;background:#ddd"></i>
<div class="a" style="left:61px;top:6px;width:27px;height:18px;border-radius:9px;background:#d8403a;color:#fff;font-size:11px;text-align:center;line-height:18px">1, 6</div>
<span style="left:108px">问题</span><span style="left:150px">输出</span><span style="left:192px">终端</span><span style="left:234px">代码质量</span>
<svg class="a" style="left:1098px;top:9px" width="50" height="14" viewBox="0 0 50 14" fill="none" stroke="#d8d8d8" stroke-width="1.300"><path d="M3 9.500L8 4.500L13 9.500M35.500 3L44.500 12M44.500 3L35.500 12"/></svg>
</div>
<div class="a" id="dt">
<svg class="a" style="left:9px;top:5px" width="18" height="18" viewBox="0 0 18 18" fill="none" stroke="#9aa0a6" stroke-width="1.300"><path d="M7 13.500H2.500V2.500H13.500V6"/><path d="M7.500 7L15 10L11.800 11.300L14.500 14.800L13.300 15.800L10.600 12.300L8.800 14.800Z" fill="#9aa0a6" stroke="none"/></svg>
<i class="a" style="left:35px;top:5px;width:1px;height:16px;background:#494c50"></i>
<div class="a" style="left:41px;top:0;width:54px;height:26px;background:#000"></div>
<span style="left:52px;color:#fff">Wxml</span><span style="left:106px">Console</span><span style="left:172px">Sources</span><span style="left:237px">Network</span><span style="left:306px">Performance</span><span style="left:396px">Memory</span><span style="left:464px">AppData</span><span style="left:534px">Storage</span><span style="left:598px">Security</span><span style="left:673px">Sensor</span><span style="left:732px">Mock</span><span style="left:785px">Audits</span><span style="left:842px">Vulnerability</span>
<svg class="a" style="left:1014px;top:3px" width="150" height="20" viewBox="0 0 150 20"><circle cx="7" cy="10" r="4.600" fill="#e8394b"/><path d="M5.200 8.200L8.800 11.800M8.800 8.200L5.200 11.800" stroke="#fff" stroke-width="1.200"/><path d="M33.500 5L38.800 14.500H28.200Z" fill="#f2b632"/><path d="M33.500 8.500V11.300M33.500 12.300V13.500" stroke="#222" stroke-width="1.200"/><path d="M59.500 2V18" stroke="#494c50"/>
<g transform="translate(78,10)" fill="#8b8b8b"><path d="M-2.12 -4.75L-2.10 -6.78L2.10 -6.78L2.12 -4.75L3.05 -4.21L4.83 -5.21L6.92 -1.57L5.17 -0.54L5.17 0.54L6.92 1.57L4.83 5.21L3.05 4.21L2.12 4.75L2.10 6.78L-2.10 6.78L-2.12 4.75L-3.05 4.21L-4.83 5.21L-6.92 1.57L-5.17 0.54L-5.17 -0.54L-6.92 -1.57L-4.83 -5.21L-3.05 -4.21Z" stroke="#8b8b8b" stroke-width="0.8" stroke-linejoin="round"/><circle cx="0" cy="0" r="2.6" fill="#292a2d"/></g>
<g fill="#8b8b8b"><circle cx="106.5" cy="5.4" r="1.5"/><circle cx="106.5" cy="10.5" r="1.5"/><circle cx="106.5" cy="15.700" r="1.5"/></g>
<path d="M130.9 9H127.3V16.600H137.900V13.900" fill="none" stroke="#6e6e6e" stroke-width="2.200"/><rect x="132.100" y="4.700" width="9.500" height="8" fill="none" stroke="#6e6e6e" stroke-width="2.400"/></svg>
</div>
<span class="a" style="left:1737px;top:794px;font-size:12px;color:#dcdcdc">1</span><span class="a" style="left:1764px;top:794px;font-size:12px;color:#dcdcdc">6</span>
<div class="wx" style="left:722px;top:819.500px">&lt;page&gt;</div>
<i class="a" style="left:725.500px;top:836.500px;border:4px solid transparent;border-left:5.500px solid #a0a0a0;border-right:0"></i>
<div class="wx" style="left:733.500px;top:836.500px">&lt;view <b>class</b>="<u>center</u>"&gt;<i>…</i>&lt;/view&gt;</div>
<div class="wx" style="left:722px;top:853.500px">&lt;/page&gt;</div>
<div class="a" style="left:1547px;top:813px;width:1px;height:197px;background:#4a4a4a"></div>
<div class="a" id="st" style="left:1548px;top:813px;width:325px;height:54px">
<div class="a" style="left:0;top:0;width:325px;height:26px;background:#292a2d;border-bottom:1px solid #3d3d3d"></div>
<div class="a" style="left:0;top:0;width:50px;height:26px;background:#000"></div>
<span style="left:9px;color:#fff">Styles</span><span style="left:59px">Computed</span><span style="left:136px">Dataset</span><span style="left:195px">Component Data</span>
<svg class="a" style="left:303px;top:8px" width="12" height="10" viewBox="0 0 12 10" fill="none" stroke="#9aa0a6" stroke-width="1.200"><path d="M1.500 1L5.500 5L1.500 9M6.500 1L10.500 5L6.500 9"/></svg>
<div class="a" style="left:0;top:26px;width:325px;height:28px;background:#242424;border-bottom:1px solid #3d3d3d"></div>
<div class="a" style="left:3px;top:29px;width:250px;height:22px;background:#2b2b2b"></div>
<span style="left:7px;top:34px;color:#8a8a8a">Filter</span>
<span style="left:263px;top:34px;font-family:'Liberation Mono',monospace;font-weight:bold;font-size:11.500px;color:#d0d0d0">.cls</span>
<svg class="a" style="left:302px;top:33px" width="18" height="16" viewBox="0 0 18 16" fill="none" stroke="#6a6a6a" stroke-width="1.200"><path d="M6 2V12M1 7H11"/><path d="M16.500 10.500V14.500H12.500Z" fill="#6a6a6a" stroke="none"/></svg>
</div>
<div class="a" id="wm"><span style="font-size:49.5px">九块九源码网</span><span style="font-size:50.45px;margin-left:3px"> www.9k9ym.com</span></div>
</div></div>
<div class="a" style="left:1875px;top:751px;width:5px;height:44px;background:#fafafa;border-radius:3px 0 0 3px"></div>
<div class="a" id="edgeB"></div>
</body>
</html>
